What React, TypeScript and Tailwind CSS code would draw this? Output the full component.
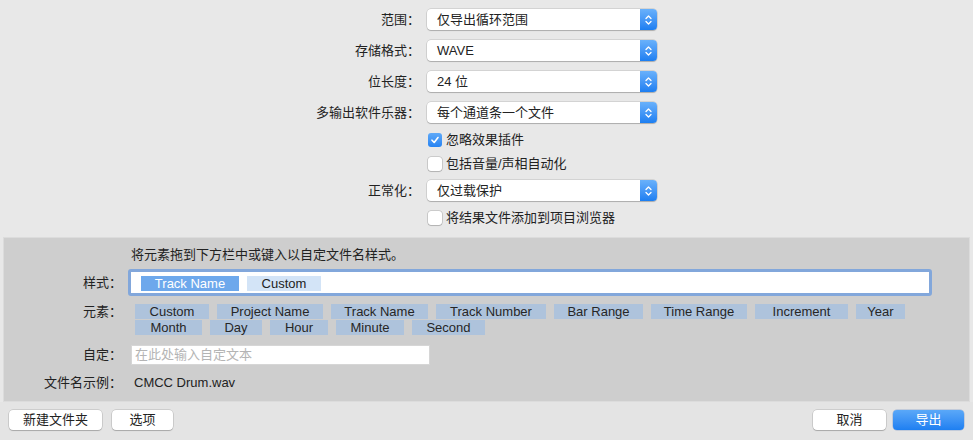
import React from 'react';

const FONT = '"Liberation Sans", "Noto Sans CJK SC", sans-serif';

function Stepper() {
  return (
    <div className="flex w-[17px] items-center justify-center rounded-r-[4px] bg-gradient-to-b from-[#69b1fb] to-[#1b7ef1]">
      <svg width="7" height="12" viewBox="0 0 7 12">
        <path d="M1 4.5 L3.5 2 L6 4.5 M1 7.5 L3.5 10 L6 7.5" stroke="white" strokeWidth="1.3" fill="none" strokeLinecap="round" strokeLinejoin="round" />
      </svg>
    </div>
  );
}

function Select({ value }: { value: string }) {
  return (
    <div className="flex h-[21px] w-[230px] rounded-[4px] bg-white shadow-[0_0_0_0.5px_rgba(0,0,0,0.18),0_1px_1px_rgba(0,0,0,0.18)]">
      <div className="flex-1 pl-[10px] text-[13px] leading-[21px] text-[#222]">{value}</div>
      <Stepper />
    </div>
  );
}

function Checkbox({ checked, label }: { checked?: boolean; label: string }) {
  return (
    <div className="flex h-[20px] items-center gap-[4px] pl-[1px]">
      {checked ? (
        <div className="flex h-[14px] w-[14px] items-center justify-center rounded-[3px] bg-gradient-to-b from-[#5ea9f8] to-[#2583f2]">
          <svg width="10" height="10" viewBox="0 0 10 10">
            <path d="M2 5.2 L4.2 7.5 L8 2.5" stroke="white" strokeWidth="1.6" fill="none" strokeLinecap="round" strokeLinejoin="round" />
          </svg>
        </div>
      ) : (
        <div className="h-[14px] w-[14px] rounded-[3px] bg-white shadow-[0_0_0_0.5px_rgba(0,0,0,0.25),0_1px_1px_rgba(0,0,0,0.12)]" />
      )}
      <span className="text-[13px] text-[#222]">{label}</span>
    </div>
  );
}

function Button({ label, primary, w }: { label: string; primary?: boolean; w: string }) {
  return (
    <div
      className={`flex h-[20px] items-center justify-center rounded-[4px] text-[13px] ${w} ${
        primary
          ? 'bg-gradient-to-b from-[#5aa8f8] to-[#1d7ff1] text-white shadow-[0_0_0_0.5px_rgba(0,60,160,0.3)]'
          : 'bg-white text-[#222] shadow-[0_0_0_0.5px_rgba(0,0,0,0.2),0_1px_1px_rgba(0,0,0,0.18)]'
      }`}
    >
      {label}
    </div>
  );
}

const row1 = [
  ['Custom', 'w-[74px]'],
  ['Project Name', 'w-[106px]'],
  ['Track Name', 'w-[97px]'],
  ['Track Number', 'w-[110px]'],
  ['Bar Range', 'w-[89px]'],
  ['Time Range', 'w-[96px]'],
  ['Increment', 'w-[93px]'],
  ['Year', 'w-[49px]'],
];
const row2 = [
  ['Month', 'w-[67px]'],
  ['Day', 'w-[52px]'],
  ['Hour', 'w-[58px]'],
  ['Minute', 'w-[68px]'],
  ['Second', 'w-[73px]'],
];

function Token({ label, w }: { label: string; w: string }) {
  return (
    <div className={`flex h-[15px] items-center justify-center bg-[#aec3dc] text-[13px] text-[#262626] ${w}`}>{label}</div>
  );
}

export default function App() {
  return (
    <div className="flex h-[440px] w-[973px] flex-col overflow-hidden bg-[#e8e8e8]" style={{ fontFamily: FONT }}>
      {/* Top form */}
      <div className="grid grid-cols-[420px_1fr] items-center gap-x-[7px] pt-[9px] text-[13px] text-[#222]">
        <div className="text-right">范围：</div>
        <Select value="仅导出循环范围" />
        <div className="mt-[10px] text-right">存储格式：</div>
        <div className="mt-[10px]"><Select value="WAVE" /></div>
        <div className="mt-[10px] text-right">位长度：</div>
        <div className="mt-[10px]"><Select value="24 位" /></div>
        <div className="mt-[10px] text-right">多输出软件乐器：</div>
        <div className="mt-[10px]"><Select value="每个通道条一个文件" /></div>
        <div />
        <div className="mt-[7px]"><Checkbox checked label="忽略效果插件" /></div>
        <div />
        <div className="mt-[4px]"><Checkbox label="包括音量/声相自动化" /></div>
        <div className="mt-[6px] text-right">正常化：</div>
        <div className="mt-[6px]"><Select value="仅过载保护" /></div>
        <div />
        <div className="mt-[7px]"><Checkbox label="将结果文件添加到项目浏览器" /></div>
      </div>

      {/* File name panel */}
      <div className="mx-[3px] mt-[9px] flex flex-col border border-[#dcdcdc] bg-[#cecece] pb-[9px] pt-[8px] text-[13px] text-[#222]">
        <div className="flex h-[18px] items-center">
          <div className="w-[118px]" />
          <div className="pl-[9px]">将元素拖到下方栏中或键入以自定文件名样式。</div>
        </div>
        <div className="mt-[5px] flex items-center">
          <div className="w-[118px] text-right">样式：</div>
          <div className="ml-[6px] flex h-[27px] w-[804px] items-start rounded-[3px] border-[3px] border-[#82a7db] bg-white pl-[10px] pt-[4px]">
            <div className="flex h-[15px] w-[98px] items-center justify-center bg-[#6da8ec] text-white">Track Name</div>
            <div className="ml-[8px] flex h-[15px] w-[74px] items-center justify-center bg-[#d3e4f7] text-[#222]">Custom</div>
          </div>
        </div>
        <div className="mt-[8px] flex items-start">
          <div className="w-[118px] text-right leading-[15px]">元素：</div>
          <div className="ml-[13px] flex flex-col gap-[1px]">
            <div className="flex gap-[8px]">
              {row1.map(([l, w]) => <Token key={l} label={l} w={w} />)}
            </div>
            <div className="flex gap-[8px]">
              {row2.map(([l, w]) => <Token key={l} label={l} w={w} />)}
            </div>
          </div>
        </div>
        <div className="mt-[10px] flex items-center">
          <div className="w-[118px] text-right">自定：</div>
          <div className="ml-[9px] flex h-[20px] w-[299px] items-center border border-[#d6d6d6] bg-white pl-[3px] text-[#b4b4b4]">在此处输入自定文本</div>
        </div>
        <div className="mt-[9px] flex h-[18px] items-center">
          <div className="w-[118px] text-right">文件名示例：</div>
          <div className="pl-[12px]">CMCC Drum.wav</div>
        </div>
      </div>

      {/* Bottom bar */}
      <div className="flex flex-1 items-start justify-between bg-[#e4e4e4] px-[9px] pt-[8px]">
        <div className="flex gap-[10px]">
          <Button label="新建文件夹" w="w-[93px]" />
          <Button label="选项" w="w-[61px]" />
        </div>
        <div className="flex gap-[7px]">
          <Button label="取消" w="w-[73px]" />
          <Button label="导出" w="w-[71px]" primary />
        </div>
      </div>
    </div>
  );
}
